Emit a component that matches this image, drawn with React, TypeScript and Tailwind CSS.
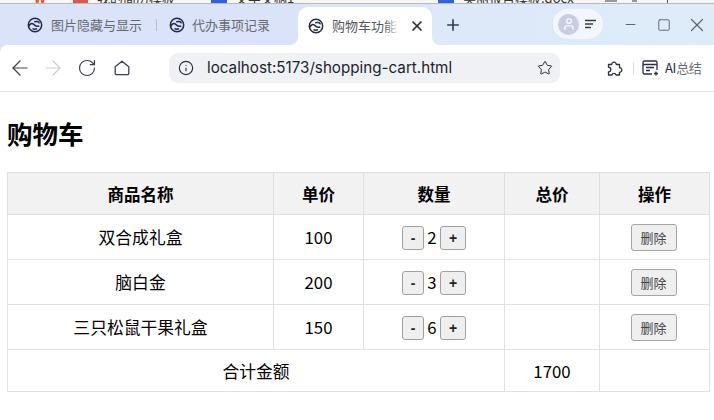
import { ArrowLeft, ArrowRight, RotateCw, Info, Star, Minus, Square, X, Plus, User } from "lucide-react"

const cjk = "font-['Noto_Sans_CJK_SC','Noto_Sans',sans-serif]"

function TabIcon() {
  return (
    <svg width="16" height="16" viewBox="0 0 16 16" fill="none" stroke="#262b4e" strokeWidth="1.5" className="shrink-0">
      <circle cx="8" cy="8" r="6.7" />
      <path d="M1.800 9.400C3 6.400 5 5.800 6.800 7.400S10 10.400 12.200 8.800" />
      <path d="M7.200 4.800c2-.8 4.600-.4 5.200 1.600" />
      <path d="M5.500 11.600c1.200.6 3 .7 4.600 0" />
    </svg>
  )
}

function Clipped({ className, children }: { className: string; children: React.ReactNode }) {
  return (
    <span className={`h-[3px] overflow-hidden shrink-0 whitespace-nowrap ${className}`}>
      <span className="block -mt-[9px]">{children}</span>
    </span>
  )
}

function Qty({ n }: { n: number }) {
  return (
    <div className="flex items-center justify-center pt-[2px]">
      <button className="w-[22px] h-[24px] bg-[#efefef] border border-[#a0a0a0] rounded-[3px] text-[14px] font-bold leading-none font-['Liberation_Sans',sans-serif] text-[#222]">-</button>
      <span className="w-[16px] text-center relative -top-[1px]">{n}</span>
      <button className="w-[26px] h-[24px] bg-[#efefef] border border-[#a0a0a0] rounded-[3px] text-[14px] font-bold leading-none font-['Liberation_Sans',sans-serif] text-[#222]">+</button>
    </div>
  )
}

function Del() {
  return (
    <button className="mr-[2px] w-[46px] h-[27px] bg-[#efefef] border border-[#a5a5a5] rounded-[3px] text-[13px] leading-none text-[#444]">删除</button>
  )
}

const rows = [
  { name: "双合成礼盒", price: 100, qty: 2 },
  { name: "脑白金", price: 200, qty: 3 },
  { name: "三只松鼠干果礼盒", price: 150, qty: 6 },
]

export default function App() {
  return (
    <div className={`w-[714px] h-[420px] overflow-hidden bg-white text-black ${cjk}`}>
      {/* cropped window behind the browser */}
      <div className="h-[4px] overflow-hidden bg-[#f6f6f6] border-b border-[#b8b8b8] flex items-start text-[13px] leading-none text-[#333]">
        <Clipped className="ml-[34px] w-[12px] font-bold text-[#e8532b]">W</Clipped>
        <div className="ml-[27px] w-[15px] h-[3px] bg-[#e2574c] shrink-0" />
        <Clipped className="ml-[9px] w-[114px]">我的简历模板</Clipped>
        <div className="w-[16px] h-[3px] bg-[#2f62e0] shrink-0" />
        <Clipped className="ml-[8px] w-[203px]">文字文稿1</Clipped>
        <div className="w-[16px] h-[3px] bg-[#2f62e0] shrink-0" />
        <Clipped className="ml-[9px] w-[142px]">美丽报告模板.docx</Clipped>
        <div className="w-[12px] h-[2px] bg-[#999] shrink-0" />
        <div className="ml-[15px] w-[5px] h-[2px] bg-[#999] shrink-0" />
        <div className="ml-[30px] w-[1px] h-[3px] bg-[#555] shrink-0" />
      </div>

      {/* tab strip */}
      <div className="h-[41px] flex bg-white">
        <div className="flex items-center h-full pl-[27px] text-[13px] text-[#666973] w-[298px] bg-[#dbe3f8] rounded-br-[8px]">
          <TabIcon />
          <span className="ml-[8px]">图片隐藏与显示</span>
          <span className="ml-[14px] w-[1px] h-[12px] bg-[#b9bdc9]" />
          <span className="ml-[12px]"><TabIcon /></span>
          <span className="ml-[7px]">代办事项记录</span>
        </div>
        <div className="w-[134px] bg-[#dce5f8] shrink-0">
          <div className="mt-[3px] w-[134px] h-[38px] bg-white rounded-t-[10px] flex items-center pl-[10px] text-[13px] text-[#55585f] relative">
            <TabIcon />
            <span className="ml-[8px] w-[66px] overflow-hidden whitespace-nowrap">购物车功能页</span>
            <span className="absolute left-[86px] w-[16px] h-[20px] bg-gradient-to-r from-transparent to-white" />
            <X size={16} strokeWidth={2.6} className="ml-[11px] text-[#2b2e3a]" />
          </div>
        </div>
        <div className="flex-1 flex bg-gradient-to-r from-[#dde8f9] to-[#deecf9] rounded-bl-[8px]">
          <Plus size={18} strokeWidth={2.2} className="ml-[12px] self-center text-[#3a3d4a]" />
          <div className="ml-[91px] mt-[5px] w-[50px] h-[30px] bg-[#f3f7fd] rounded-full flex items-center pl-[5px]">
            <span className="w-[21px] h-[21px] rounded-full bg-[#c9cde3] flex items-center justify-center">
              <User size={14} className="text-white" />
            </span>
            <svg width="12" height="10" viewBox="0 0 12 10" stroke="#3a3d4a" strokeWidth="1.3" className="ml-[6px]">
              <path d="M0 1.500h11M0 5h8M0 8.500h6" />
            </svg>
          </div>
          <Minus size={15} strokeWidth={1.6} className="ml-[20px] self-center text-[#5f6472]" />
          <Square size={14} strokeWidth={1.6} className="ml-[19px] self-center text-[#5f6472]" />
          <X size={22} strokeWidth={1.3} className="ml-[15px] self-center text-[#5f6472]" />
        </div>
      </div>

      {/* toolbar */}
      <div className="bg-[#dbe3f8]">
        <div className="h-[46px] bg-white rounded-tl-[8px] flex items-center">
          <ArrowLeft size={24} strokeWidth={1.2} className="ml-[8px] text-[#3b3f52]" />
          <ArrowRight size={24} strokeWidth={1.2} className="ml-[9px] text-[#c9ccd6]" />
          <RotateCw size={20} strokeWidth={1.4} className="ml-[12px] text-[#3b3f52]" />
          <svg width="16" height="16" viewBox="0 0 16 16" fill="none" stroke="#3b3f52" strokeWidth="1.3" strokeLinejoin="round" className="ml-[17px]">
            <path d="M1.200 6.800 8 1.200l6.800 5.600v6.400a1.500 1.500 0 0 1-1.500 1.500H2.700a1.500 1.500 0 0 1-1.500-1.500z" />
          </svg>
          <div className="ml-[39px] w-[391px] h-[30px] bg-[#f0f1f5] rounded-[9px] flex items-center pl-[9px] font-['Inter',sans-serif] text-[15.2px] text-[#1c1f2e]">
            <Info size={16} strokeWidth={1.7} className="text-[#2b2e3a]" />
            <span className="ml-[13px]">localhost:5173/shopping-cart.html</span>
            <Star size={16} strokeWidth={1.5} className="ml-auto mr-[7px] text-[#2b2e3a]" />
          </div>
          <svg width="18" height="18" viewBox="0 0 18 18" fill="none" stroke="#2b2e45" strokeWidth="1.3" strokeLinejoin="round" className="ml-[46px]">
            <path d="M2.500 5.500h3.200a2.300 2.300 0 1 1 4.600 0h3.200v3.200a2.300 2.300 0 1 1 0 4.600v2.700h-3.400a2.200 2.200 0 0 0-4.200 0H2.500v-3.200a2.300 2.300 0 0 0 0-4.600z" />
          </svg>
          <span className="ml-[9px] w-[1px] h-[13px] bg-[#dfe1e6]" />
          <svg width="17" height="16" viewBox="0 0 17 16" fill="none" stroke="#2b2e45" strokeWidth="1.3" className="ml-[8px]">
            <path d="M10 14H2.500A1.500 1.500 0 0 1 1 12.500V2.500A1.500 1.500 0 0 1 2.500 1h11A1.500 1.500 0 0 1 15 2.500V10" />
            <path d="M1 4.500h14M4 7.500h8M4 10.500h4M14 11.500v4M12 13.500h4" />
          </svg>
          <span className="ml-[6px] text-[13px] text-[#2b2e3a] whitespace-nowrap tracking-[-0.3px]">AI<span className="text-[#6a6d76]">总结</span></span>
        </div>
      </div>
      <div className="h-[1px] bg-[#e4e4e6]" />

      {/* page */}
      <main className="px-[7px] text-[16.8px] leading-[24px]">
        <h1 className="mt-[24px] mb-[22px] h-[34px] text-[25.500px] leading-[34px] font-bold">购物车</h1>
        <table className="w-[702px] table-fixed border-collapse text-center">
          <colgroup>
            <col className="w-[266px]" />
            <col className="w-[90px]" />
            <col className="w-[141px]" />
            <col className="w-[95px]" />
            <col className="w-[110px]" />
          </colgroup>
          <thead>
            <tr className="h-[42px] bg-[#f2f2f2]">
              {["商品名称", "单价", "数量", "总价", "操作"].map((t) => (
                <th key={t} className="border border-[#dedede] p-0 font-bold text-[16.5px]">{t}</th>
              ))}
            </tr>
          </thead>
          <tbody>
            {rows.map((r) => (
              <tr key={r.name} className="h-[45px]">
                <td className="border border-[#e2e2e2] p-0">{r.name}</td>
                <td className="border border-[#e2e2e2] p-0">{r.price}</td>
                <td className="border border-[#e2e2e2] p-0"><Qty n={r.qty} /></td>
                <td className="border border-[#e2e2e2] p-0"></td>
                <td className="border border-[#e2e2e2] p-0"><Del /></td>
              </tr>
            ))}
            <tr className="h-[42px]">
              <td colSpan={3} className="border border-[#e2e2e2] p-0">合计金额</td>
              <td className="border border-[#e2e2e2] p-0">1700</td>
              <td className="border border-[#e2e2e2] p-0"></td>
            </tr>
          </tbody>
        </table>
      </main>
    </div>
  )
}
